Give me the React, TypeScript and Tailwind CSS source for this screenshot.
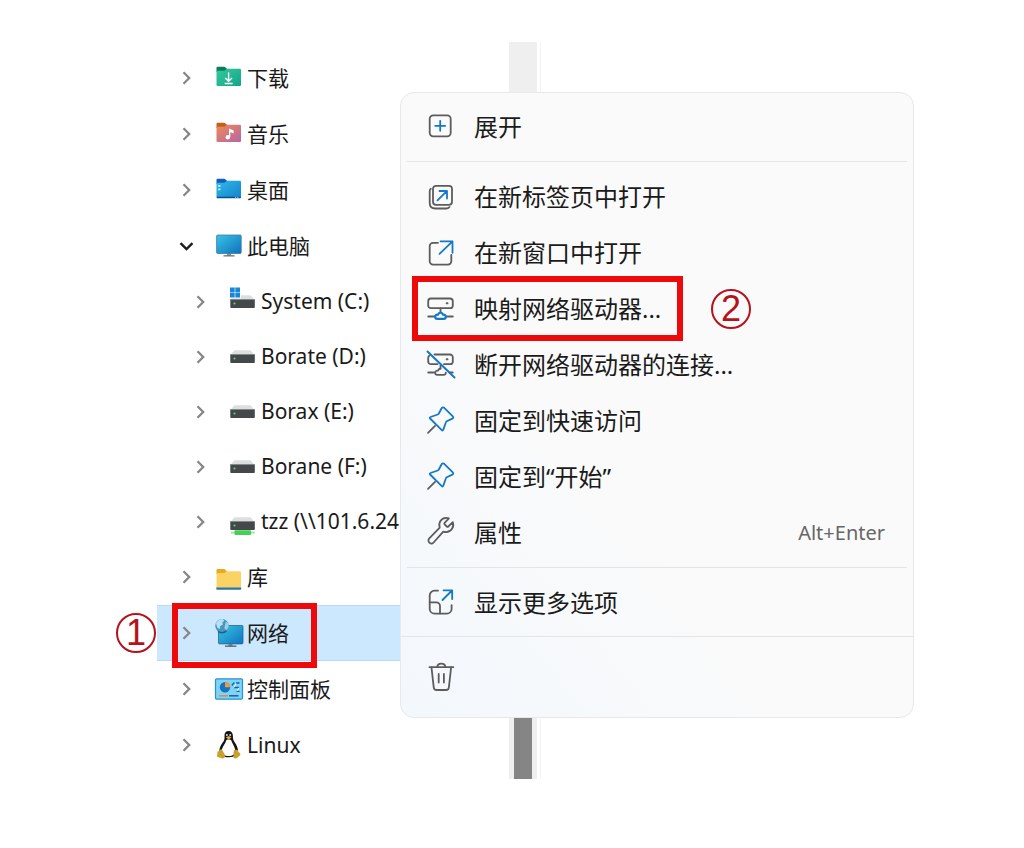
import React from "react";

const GREY = "#5c5c5c";
const BLUE = "#1677c8";

/* ---------- Tree icons (30 x 30) ---------- */

function TreeSvg({ children }: { children: React.ReactNode }) {
  return (
    <svg viewBox="0 0 30 30" className="h-[30px] w-[30px] shrink-0" fill="none" aria-hidden="true">
      {children}
    </svg>
  );
}

function FolderIcon({
  id,
  from,
  to,
  tab,
  children,
}: {
  id: string;
  from: string;
  to: string;
  tab: string;
  children?: React.ReactNode;
}) {
  return (
    <TreeSvg>
      <defs>
        <linearGradient id={id} x1="0" y1="0" x2="1" y2="1">
          <stop offset="0" stopColor={from} />
          <stop offset="1" stopColor={to} />
        </linearGradient>
      </defs>
      <path d="M2.5 5a1.2 1.2 0 0 1 1.2-1.2h6.4c.6 0 1 .2 1.4.6l1.6 1.4V9H2.5z" fill={tab} />
      <path
        d="M2.5 7.8h7.2c.6 0 1-.2 1.4-.6l1.1-1c.4-.4.8-.5 1.3-.5h12.2c.7 0 1.3.5 1.3 1.2v15c0 .7-.6 1.2-1.3 1.2H3.8c-.7 0-1.3-.5-1.3-1.2z"
        fill={`url(#${id})`}
      />
      {children}
    </TreeSvg>
  );
}

const DownloadsIcon = () => (
  <FolderIcon id="downloads" from="#35c99a" to="#13a58c" tab="#0b7d5c">
    <path d="M14.6 9.500v8.500M11.200 15l3.400 3.300L18 15M10.600 20.500h8" stroke="#fff" strokeWidth="1.4" />
  </FolderIcon>
);

const MusicIcon = () => (
  <FolderIcon id="music" from="#f08a55" to="#b565a8" tab="#c2611a">
    <circle cx="13.8" cy="18.200" r="2.2" fill="#fff" />
    <path d="M15 18V9.600l4.600 2v3l-3.300-1.600V18z" fill="#fff" />
  </FolderIcon>
);

const DesktopIcon = () => (
  <FolderIcon id="desktop" from="#33b9ea" to="#1283c9" tab="#0c5fc0">
    <path d="M4.200 10h2.200v1.700H4.200zM4.200 13.500h2.200v1.700H4.200z" fill="#d8f3ff" />
    <path d="M2.800 21.800h24v.6c0 .5-.4.900-.9.900H3.700a.9.900 0 0 1-.9-.9z" fill="#0b4f86" />
    <path d="M21 22.300h1.200M23.200 22.300h1.200" stroke="#d8f3ff" strokeWidth=".8" />
  </FolderIcon>
);

const ThisPcIcon = () => (
  <TreeSvg>
    <defs>
      <linearGradient id="pc" x1="0" y1="0" x2="1" y2="1">
        <stop offset="0" stopColor="#38c5e6" />
        <stop offset="1" stopColor="#0f70bd" />
      </linearGradient>
    </defs>
    <path d="M13 22h4v3h-4z" fill="#8b979f" />
    <path d="M9.500 24.200h11v1.300h-11z" fill="#66727a" />
    <rect x="2.6" y="4" width="24.6" height="18.500" rx="1" fill="url(#pc)" stroke="#3d7c9d" strokeWidth=".8" />
  </TreeSvg>
);

function DriveBody() {
  return (
    <>
      <path d="M6.500 8.200h16l4.200 4.800H2.300z" fill="#dcdfe0" />
      <path d="M2.300 12.200h24.500v8c0 .4-.3.800-.8.800H3.100c-.5 0-.8-.4-.8-.8z" fill="#44484a" />
      <path d="M2.300 12.500h24.500" stroke="#8b8f91" strokeWidth=".8" />
      <circle cx="6.500" cy="16.500" r="1.100" fill="#5fd35f" />
    </>
  );
}

const DriveIcon = () => (
  <TreeSvg>
    <DriveBody />
  </TreeSvg>
);

const SystemDriveIcon = () => (
  <TreeSvg>
    <DriveBody />
    <path d="M1 0h12v11.200H1z" fill="#fff" />
    <path d="M2 .500h4.700v4.700H2zM7.300.500H12v4.700H7.300zM2 5.800h4.700v4.700H2zM7.300 5.800H12v4.700H7.300z" fill="#1787d8" />
  </TreeSvg>
);

const NetworkDriveIcon = () => (
  <TreeSvg>
    <g transform="translate(0 2)">
      <DriveBody />
    </g>
    <path d="M2.800 25.600h24" stroke="#9fe3a6" strokeWidth="2" />
    <rect x="6.500" y="23.200" width="16.500" height="4.800" rx=".8" fill="#45cf55" />
  </TreeSvg>
);

const LibraryIcon = () => (
  <TreeSvg>
    <path d="M2.500 8.200c0-.7.500-1.200 1.200-1.200h6.200c.5 0 .9.200 1.200.5l1.700 1.500v3H2.500z" fill="#e6ab1e" />
    <path
      d="M2.500 11h7.600c.5 0 .9-.2 1.200-.5l1-.9c.3-.3.700-.4 1.100-.4h12.400c.7 0 1.200.5 1.200 1.200V26H2.500z"
      fill="#fbd364"
    />
    <path d="M2.300 25.500h24.900v1.300c0 .6-.4 1-1 1H3.300c-.6 0-1-.4-1-1z" fill="#2a76a8" />
  </TreeSvg>
);

const NetworkIcon = () => (
  <TreeSvg>
    <defs>
      <linearGradient id="net" x1="0" y1="0" x2="1" y2="1">
        <stop offset="0" stopColor="#38c5e6" />
        <stop offset="1" stopColor="#0f74bf" />
      </linearGradient>
    </defs>
    <path d="M14.500 25.500h4V28h-4z" fill="#7d8a93" />
    <path d="M11 27.500h11.500v1.400H11z" fill="#5c6870" />
    <rect x="4.500" y="7.500" width="24.500" height="18.400" rx="1" fill="url(#net)" stroke="#1d6a96" strokeWidth=".8" />
    <circle cx="8" cy="7.800" r="6.800" fill="#4696c4" />
    <path d="M2 5.200C3.500 2.500 6 1 8.500 1l1.800 1.700-2 1.800L9 6.500 6.200 8 5.600 11.300 3.200 9.600z" fill="#b9e0ee" />
    <path d="M11.800 3.700l2.500 1.300.4 3.800-2.300 3.400-2-2 .6-3.200z" fill="#9dd0e4" />
    <path d="M4 13.300a6.800 6.800 0 0 0 8.500-.4" stroke="#1f5f8c" strokeWidth="1.500" />
  </TreeSvg>
);

const ControlPanelIcon = () => (
  <TreeSvg>
    <rect x="1.500" y="4.800" width="27" height="20.400" rx="1.200" fill="#7fd3f7" stroke="#2894cf" strokeWidth="1.200" />
    <circle cx="11" cy="13.300" r="5.200" fill="#1474bd" />
    <path d="M11 13.300V8.100a5.200 5.200 0 0 1 5.200 5.200z" fill="#f59a3c" />
    <path d="M17.800 11.500l2.500-3M22 9h3.500M20 13.500h5.200M22.500 17.300h3" stroke="#14639f" strokeWidth="1.300" />
    <path d="M22 9.500l-2 4M25 13.700l-2 3.300" stroke="#fff" strokeWidth=".9" />
    <path d="M5 21.800h9" stroke="#e08a3a" strokeWidth="1.500" />
    <path d="M15 21.800h9.500" stroke="#14639f" strokeWidth="1.500" />
  </TreeSvg>
);

const LinuxIcon = () => (
  <TreeSvg>
    <path
      d="M14.700 1c-2.800 0-4.300 2-4.200 4.800.1 2.600.2 4-1.400 6.200-2 2.700-3.800 5.900-3.800 9.200 0 3.600 3.500 6 9.500 6s9.200-2.400 9.200-6.100c0-3.500-1.700-6.500-3.500-9-1.400-2-1.600-3.500-1.600-6C18.900 3 17.500 1 14.700 1z"
      fill="#141414"
    />
    <path
      d="M14.600 9.500c-1.700 0-2.500.5-2.800 1.900-.5 2.400-4 5.500-4 9.600 0 3.300 2.900 5 6.900 5s6.600-1.800 6.600-5c0-4-2.800-7-3.600-9.500-.4-1.400-1.200-2-3.100-2z"
      fill="#fff"
    />
    <circle cx="12.900" cy="4.900" r="1" fill="#ddd" />
    <circle cx="16.200" cy="4.900" r="1" fill="#ddd" />
    <path d="M11.800 7.400l2.700-1.500 3 1.400-2.700 2.300z" fill="#e2b22e" />
    <path
      d="M3.800 21.500c.9-.3 1.700-.4 2.200-1.400.6-1 1.600-1 2.300.1l2.500 4.300c1 1.800.2 3.800-1.800 4-1.900.2-3-1-5-1.400-1.200-.2-1-1.200-.7-2.300.3-1.100-.2-2.800.5-3.300z"
      fill="#c9a02c"
    />
    <path
      d="M25.500 22.800c-.8-.5-1.300-1-1.400-2-.8-1.400-3.500-1.300-4.400.1-.4 1.600.1 3.400-.3 5.200-.4 1.900 1.300 3 2.900 2.100 1-.6 1.800-1.500 3-2.200 1.400-.8 1.500-2.200.2-3.200z"
      fill="#c9a02c"
    />
  </TreeSvg>
);

/* ---------- Menu icons (28 x 28) ---------- */

function MenuSvg({ children }: { children: React.ReactNode }) {
  return (
    <svg
      viewBox="0 0 28 28"
      className="h-7 w-7 shrink-0 overflow-visible"
      fill="none"
      stroke={GREY}
      strokeWidth="1.8"
      strokeLinecap="round"
      strokeLinejoin="round"
      aria-hidden="true"
    >
      {children}
    </svg>
  );
}

const ExpandIcon = () => (
  <MenuSvg>
    <rect x="2.700" y="2.300" width="21" height="21" rx="3.500" />
    <path d="M13.200 7.800v10M8.200 12.800h10" stroke={BLUE} />
  </MenuSvg>
);

const NewTabIcon = () => (
  <MenuSvg>
    <rect x="6" y="2.800" width="19" height="19" rx="3" />
    <path d="M3.800 5.700c-.8.600-1.100 1.500-1.100 2.600v11.400c0 3.600 2.200 5.800 5.700 5.800h11.200c1.300 0 2.300-.5 2.900-1.400" />
    <path d="M10.500 17.300l9-9M12.500 8h7.500v7.500" stroke={BLUE} />
  </MenuSvg>
);

const NewWindowIcon = () => (
  <MenuSvg>
    <path d="M11 3.800H6a3.300 3.300 0 0 0-3.300 3.300v15.200A3.300 3.300 0 0 0 6 25.600h15a3.300 3.300 0 0 0 3.300-3.300v-6.500" />
    <path d="M12.500 14.800L25.500 2.300M13.500 2.300h12v11.500" stroke={BLUE} />
  </MenuSvg>
);

const MapDriveIcon = () => (
  <MenuSvg>
    <rect x="1.200" y="3.500" width="24.600" height="9.700" rx="2.800" />
    <circle cx="20" cy="8.300" r=".8" fill={GREY} strokeWidth="1" />
    <path d="M13.500 13.500v4M1.200 21.500h6M20 21.500h5.800" />
    <path
      d="M13.500 17.500c-1.600 0-2.300 1.500-2.600 2.200-1.600-.2-2.700.7-2.700 2 0 1.200.9 2.100 2.200 2.100h6.200c1.300 0 2.200-.9 2.200-2.100 0-1.300-1.100-2.200-2.700-2-.3-.7-1-2.200-2.600-2.200z"
      stroke={BLUE}
      strokeWidth="2.200"
    />
  </MenuSvg>
);

const DisconnectDriveIcon = () => (
  <MenuSvg>
    <path d="M7.500 3.500H23a2.800 2.800 0 0 1 2.800 2.800v4.100a2.800 2.800 0 0 1-2.800 2.800h-6M2.500 4.500a2.800 2.800 0 0 0-1.300 2.300v3.600A2.800 2.800 0 0 0 4 13.200h6.500" />
    <circle cx="20" cy="8.300" r=".8" fill={GREY} strokeWidth="1" />
    <path d="M13.500 14.500v3M1.200 21.500h6M22.500 21.500h3.300" />
    <path d="M13.500 17.500c-1.600 0-2.300 1.500-2.600 2.200-1.600-.2-2.700.7-2.700 2 0 1.200.9 2.100 2.200 2.100h6.200c1.300 0 2.200-.9 2.200-2.100" />
    <path d="M.5.500l27 26" stroke={BLUE} strokeWidth="2" />
  </MenuSvg>
);

const PinIcon = () => (
  <MenuSvg>
    <path d="M1 25.800l7-7" />
    <path
      d="M17.200.8l8.600 8.500c.7.700.6 1.900-.4 2.300l-5.700 2.700c-.4.200-.7.500-.8.900l-2.600 7.600c-.2.700-1 .9-1.500.4L3.100 11.500c-.5-.5-.3-1.300.4-1.500l7.300-2.500c.4-.1.700-.4.9-.8l2.900-5.400c.5-1 1.800-1.200 2.600-.5z"
      stroke={BLUE}
    />
  </MenuSvg>
);

const WrenchIcon = () => (
  <MenuSvg>
    <path d="M19.200-1.200c1 0 1.900.2 2.700.5l-4.300 4.500c-.4.500-.4 1.100 0 1.500l2.200 2.200c.4.400 1.100.4 1.500 0l4.500-4.300c1.700 4.500-1.500 9.900-6.600 9.900-1.100 0-1.900-.1-2.900-.5L6.600 23.500c-1.200 1.300-3 1.300-4.200.2-1.300-1.200-1.300-3.200-.1-4.400L12.700 8.600c-1.600-5 1.700-9.800 6.500-9.800z" />
  </MenuSvg>
);

const MoreOptionsIcon = () => (
  <MenuSvg>
    <path d="M11 1.700H7.500a4.800 4.800 0 0 0-4.800 4.800v13.300a4.800 4.800 0 0 0 4.800 4.800h12.300a4.800 4.800 0 0 0 4.800-4.800v-3.600" />
    <path d="M2.700 13.300h6.500a3.800 3.800 0 0 1 3.800 3.800v7.300" />
    <path d="M15.500 11l9.500-9.500M16.500 1.300h8.700v8.700" stroke={BLUE} />
  </MenuSvg>
);

const TrashIcon = () => (
  <MenuSvg>
    <path d="M2.500 4.200h23.800M10.200 4C10.400 1.800 12 .6 14.300.6S18.200 1.800 18.400 4" />
    <path d="M4.500 4.500l2.200 19.700a3 3 0 0 0 3 2.800h9.200a3 3 0 0 0 3-2.800l2.200-19.700M11.700 11v8.500M16.900 11v8.500" />
  </MenuSvg>
);

function Chevron({ open }: { open?: boolean }) {
  return (
    <svg viewBox="0 0 16 16" className="h-4 w-4" fill="none" aria-hidden="true">
      {open ? (
        <path d="M2.500 5.200L8.500 11l6-5.800" stroke="#1c1c1c" strokeWidth="2.400" />
      ) : (
        <path d="M5.500 2.300L11.200 8l-5.700 5.700" stroke="#868686" strokeWidth="2.300" />
      )}
    </svg>
  );
}

/* ---------- Data ---------- */

type TreeNode = {
  name: string;
  icon: React.ComponentType;
  selected?: boolean;
  children?: TreeNode[];
};

const tree: TreeNode[] = [
  { name: "下载", icon: DownloadsIcon },
  { name: "音乐", icon: MusicIcon },
  { name: "桌面", icon: DesktopIcon },
  {
    name: "此电脑",
    icon: ThisPcIcon,
    children: [
      { name: "System (C:)", icon: SystemDriveIcon },
      { name: "Borate (D:)", icon: DriveIcon },
      { name: "Borax (E:)", icon: DriveIcon },
      { name: "Borane (F:)", icon: DriveIcon },
      { name: "tzz (\\\\101.6.24", icon: NetworkDriveIcon },
    ],
  },
  { name: "库", icon: LibraryIcon },
  { name: "网络", icon: NetworkIcon, selected: true },
  { name: "控制面板", icon: ControlPanelIcon },
  { name: "Linux", icon: LinuxIcon },
];

type MenuEntry = {
  label: string;
  icon: React.ComponentType;
  shortcut?: string;
  step?: number;
};

const menuSections: MenuEntry[][] = [
  [{ label: "展开", icon: ExpandIcon }],
  [
    { label: "在新标签页中打开", icon: NewTabIcon },
    { label: "在新窗口中打开", icon: NewWindowIcon },
    { label: "映射网络驱动器...", icon: MapDriveIcon, step: 2 },
    { label: "断开网络驱动器的连接...", icon: DisconnectDriveIcon },
    { label: "固定到快速访问", icon: PinIcon },
    { label: "固定到“开始”", icon: PinIcon },
    { label: "属性", icon: WrenchIcon, shortcut: "Alt+Enter" },
  ],
  [{ label: "显示更多选项", icon: MoreOptionsIcon }],
];

function StepNumber({ value }: { value: number }) {
  return (
    <span className="flex h-10 w-10 items-center justify-center rounded-full border-2 border-[#b5121b] font-['Liberation_Sans',sans-serif] text-4xl leading-none text-[#b5121b]">
      {value}
    </span>
  );
}

/* ---------- Tree ---------- */

function TreeRow({ node, nested }: { node: TreeNode; nested?: boolean }) {
  const Icon = node.icon;
  const open = !!node.children;
  return (
    <div
      className={`relative flex items-center ${nested ? "h-[55px] pl-[35px]" : "h-14 pl-[21px]"} ${
        node.selected ? "border-y border-[#b5dbf7] bg-[#cce8ff]" : ""
      }`}
    >
      <button
        type="button"
        aria-label={`${open ? "折叠" : "展开"} ${node.name}`}
        aria-expanded={open}
        className="mr-5"
      >
        <Chevron open={open} />
      </button>
      <Icon />
      <span className="ml-[3px] pt-px text-[21px] whitespace-nowrap">{node.name}</span>
      {node.selected && (
        <>
          <span className="absolute -top-[3px] left-[15px] h-[65px] w-[145px] border-6 border-[#ee0a0a]" />
          <span className="absolute top-1/2 -left-[41px] -translate-y-1/2">
            <StepNumber value={1} />
          </span>
        </>
      )}
    </div>
  );
}

function Tree() {
  return (
    <ul className="min-w-0 flex-1 pt-2 pb-1.5">
      {tree.map((node) => (
        <li key={node.name}>
          <TreeRow node={node} />
          {node.children && (
            <ul>
              {node.children.map((child) => (
                <li key={child.name}>
                  <TreeRow node={child} nested />
                </li>
              ))}
            </ul>
          )}
        </li>
      ))}
    </ul>
  );
}

/* ---------- Context menu ---------- */

function MenuRow({ entry }: { entry: MenuEntry }) {
  const Icon = entry.icon;
  return (
    <button type="button" role="menuitem" className="relative flex h-14 w-full items-center pr-7 pl-[26px] text-left">
      <Icon />
      <span className="ml-[19px] text-2xl whitespace-nowrap">{entry.label}</span>
      {entry.shortcut && <span className="ml-auto text-xl text-[#666]">{entry.shortcut}</span>}
      {entry.step && (
        <>
          <span className="absolute -top-[5px] left-[11px] h-[65px] w-[271px] border-6 border-[#ee0a0a]" />
          <span className="absolute top-1/2 left-[310px] -translate-y-1/2">
            <StepNumber value={entry.step} />
          </span>
        </>
      )}
    </button>
  );
}

function ContextMenu() {
  return (
    <div
      role="menu"
      className="absolute top-[50px] left-[243px] w-[514px] rounded-[14px] border border-[#e6e8ea] bg-linear-to-tr from-[#f3f8fd] via-[#fafafa] via-40% to-[#fafafa]"
    >
      <div className="pt-1.5 pb-[5px]">
        {menuSections.map((section, index) => (
          <React.Fragment key={index}>
            {index > 0 && <hr className="mx-1.5 mt-1.5 mb-[7px] border-[#e3e5e7]" />}
            {section.map((entry) => (
              <MenuRow key={entry.label} entry={entry} />
            ))}
          </React.Fragment>
        ))}
      </div>
      <div className="flex h-[81px] items-center border-t border-[#e3e5e7] pl-[26px]">
        <button type="button" aria-label="删除">
          <TrashIcon />
        </button>
      </div>
    </div>
  );
}

export default function App() {
  return (
    <main className="min-h-screen bg-white pt-[42px] pl-[157px] font-['Noto_Sans','Noto_Sans_CJK_SC',sans-serif] text-[#1a1a1a]">
      <div className="relative flex w-96">
        <Tree />
        {/* Scrollbar */}
        <div className="flex w-8 shrink-0 border-r border-[#f4f4f4]">
          <div className="flex w-7 flex-col items-center bg-[#efefef] pt-[60px]">
            <div className="w-[18px] flex-1 bg-[#858585]" />
          </div>
        </div>
        <ContextMenu />
      </div>
    </main>
  );
}
